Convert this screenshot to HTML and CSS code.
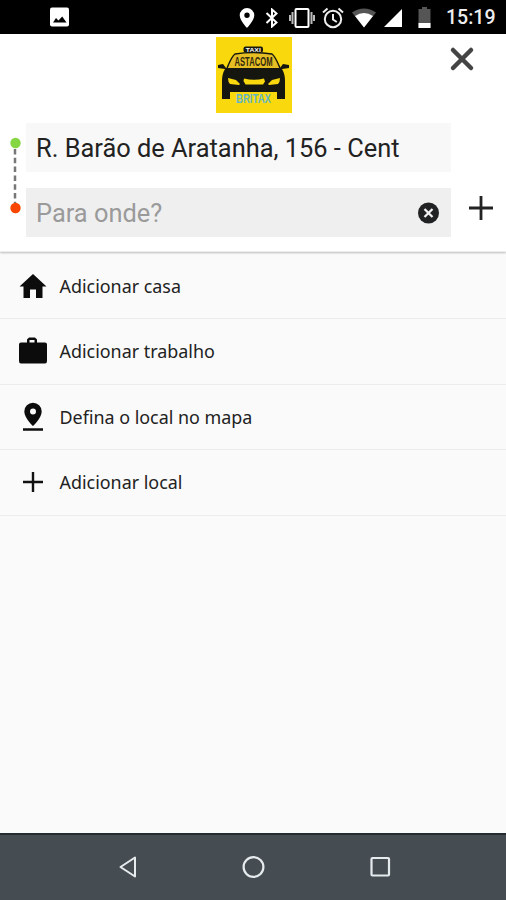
FILE: index.html
```html
<!DOCTYPE html>
<html lang="pt-BR">

<head>
  <meta charset="UTF-8" />
  <meta name="viewport" content="width=device-width, initial-scale=1.0" />
  <title>Para onde?</title>
  <link rel="stylesheet" href="styles.css">
</head>

<body>
  <div class="screen">
    <div class="status-bar">
      <svg class="photo" width="20" height="20" viewBox="0 0 20 20">
        <rect x="0" y="0.5" width="19" height="19" rx="2" fill="#fff" />
        <path d="M3 15.500l3-4.500 2.500 2.500 3.700-4 4.300 6z" fill="#000" />
      </svg>
      <div class="status-icons">
        <svg width="16" height="20" viewBox="0 0 16 20">
          <path d="M8 0a7.300 7.300 0 0 0-7.300 7.300C.700 12.500 8 20 8 20s7.300-7.500 7.300-12.700A7.300 7.300 0 0 0 8 0zm0 4.500a2.700 2.700 0 1 1 0 5.400 2.700 2.700 0 0 1 0-5.400z" fill="#fff" fill-rule="evenodd" />
        </svg>
        <svg class="bluetooth" width="14" height="20" viewBox="0 0 14 20">
          <path d="M1.500 5l10 9.500L7 18.500v-17l4.500 4L1.500 15" fill="none" stroke="#fff" stroke-width="2" />
        </svg>
        <svg class="vibrate" width="26" height="20" viewBox="0 0 26 20">
          <rect x="6.500" y="1" width="13" height="18" rx="1" fill="none" stroke="#fff" stroke-width="2" />
          <path d="M3.500 4v12M22.500 4v12M1 7v6M25 7v6" stroke="#bbb" stroke-width="2" />
        </svg>
        <svg class="alarm" width="22" height="22" viewBox="0 0 22 22">
          <circle cx="11" cy="12" r="8.200" fill="none" stroke="#eee" stroke-width="2" />
          <path d="M11 7v5.500l3.800 2.500M1 5.500l4.500-4M21 5.500l-4.500-4" fill="none" stroke="#eee" stroke-width="2" />
        </svg>
        <svg class="wifi" width="24" height="20" viewBox="0 0 24 20">
          <path d="M0 4.500Q12-3.500 24 4.500L12 19.500z" fill="#555" />
          <path d="M3 8Q12 2 21 8L12 19.500z" fill="#fff" />
        </svg>
        <svg class="signal" width="18" height="18" viewBox="0 0 18 18">
          <path d="M0 18L18 0v18z" fill="#fff" />
        </svg>
        <svg class="battery" width="13" height="21" viewBox="0 0 13 21">
          <path d="M4 0h5v2h3.500v19H.500V2H4z" fill="#555" />
          <path d="M.500 16h12v5H.500z" fill="#fff" />
        </svg>
        <span class="clock">15:19</span>
      </div>
    </div>

    <header class="header">
      <div class="top">
        <svg class="logo" width="76" height="76" viewBox="0 0 76 76">
          <rect width="76" height="76" fill="#f9d90d" />
          <rect x="27.500" y="9.500" width="19.500" height="6" rx="2" fill="#17180f" />
          <text x="37.300" y="14.700" class="logo-taxi" textLength="15" lengthAdjust="spacingAndGlyphs">TAXI</text>
          <path d="M11 31q5-12 8-14 18-3 37 0 3 2 8 14" fill="#e5be24" stroke="#17180f" stroke-width="1.500" />
          <path d="M2 28l5-1 3 4h54l3-4 6 1v3l-7 1q3 5 3 12v18h-8v-7H14v7H6V44q0-7 3-12l-7-1z" fill="#15160f" />
          <path d="M12 41l8 2 4 4-1 1-9-1q-2-2-2-6zM64 41l-8 2-4 4 1 1 9-1q2-2 2-6z" fill="#f9d90d" />
          <path d="M28 41.500q10 2.500 20 0l1 3-2 3H29.500L27.500 44z" fill="#f9d90d" />
          <text x="37.500" y="28.800" class="logo-name" textLength="38" lengthAdjust="spacingAndGlyphs">ASTACOM</text>
          <text x="37.500" y="65.800" class="logo-sub" textLength="35" lengthAdjust="spacingAndGlyphs">BRITAX</text>
        </svg>
        <svg class="close" width="26" height="26" viewBox="0 0 26 26">
          <path d="M4 4l18 18M22 4L4 22" stroke="#444" stroke-width="4.500" stroke-linecap="round" />
        </svg>
      </div>

      <div class="route">
        <svg class="track" width="12" height="78" viewBox="0 0 12 78">
          <path d="M6 12v54" stroke="#777" stroke-width="2.500" stroke-dasharray="5.500 3.300" />
          <circle cx="6.500" cy="6" r="5.200" fill="#84d643" />
          <circle cx="6.500" cy="71" r="5.200" fill="#fa4600" />
        </svg>
        <div class="fields">
          <div class="field origin"><span class="address">R. Barão de Aratanha, 156 - Cent</span></div>
          <div class="field destination">
            <span class="placeholder">Para onde?</span>
            <svg width="22" height="22" viewBox="0 0 22 22">
              <circle cx="10.500" cy="11" r="10.500" fill="#202224" />
              <path d="M6.500 7l8 8M14.500 7l-8 8" stroke="#f2f2f2" stroke-width="2.300" />
            </svg>
          </div>
        </div>
        <svg class="add" width="24" height="24" viewBox="0 0 24 24">
          <path d="M12 0v24M0 12h24" stroke="#222" stroke-width="2.800" />
        </svg>
      </div>
    </header>

    <main class="list">
      <div class="item">
        <svg width="30" height="30" viewBox="0 0 30 30">
          <path d="M15 3L1.500 15.500h4V27H12v-8.500h6V27h6.500V15.500h4z" fill="#0c0c0c" />
        </svg>
        <span>Adicionar casa</span>
      </div>
      <div class="item">
        <svg width="30" height="30" viewBox="0 0 30 30">
          <path d="M3 6.500h6V3.500l2-2h6l2 2v3h8q2 0 2 2V25q0 2.500-2 2.500H3q-2 0-2-2.500V8.500q0-2 2-2zm8.500 0h5V4h-5z" fill="#0c0c0c" fill-rule="evenodd" />
        </svg>
        <span>Adicionar trabalho</span>
      </div>
      <div class="item">
        <svg width="30" height="30" viewBox="0 0 30 30">
          <path d="M15 .800a8.700 8.700 0 0 0-8.700 8.700C6.300 16 15 24 15 24s8.700-8 8.700-14.500A8.700 8.700 0 0 0 15 .800zm0 5.700a3 3 0 1 1 0 6 3 3 0 0 1 0-6z" fill="#0c0c0c" fill-rule="evenodd" />
          <path d="M5 27.500h20" stroke="#0c0c0c" stroke-width="2.500" />
        </svg>
        <span>Defina o local no mapa</span>
      </div>
      <div class="item">
        <svg width="30" height="30" viewBox="0 0 30 30">
          <path d="M15 5v20M5 15h20" stroke="#111" stroke-width="2.400" />
        </svg>
        <span>Adicionar local</span>
      </div>
    </main>

    <nav class="nav-bar">
      <svg width="26" height="26" viewBox="0 0 26 26">
        <path d="M6 13L20.500 3.500v19z" transform="translate(1.500 0)" fill="none" stroke="#e6ebee" stroke-width="2" stroke-linejoin="round" />
      </svg>
      <svg width="26" height="26" viewBox="0 0 26 26">
        <circle cx="13.500" cy="13" r="9.900" fill="none" stroke="#e6ebee" stroke-width="2.200" />
      </svg>
      <svg width="26" height="26" viewBox="0 0 26 26">
        <rect x="4.500" y="4" width="17.500" height="17.500" rx="1" fill="none" stroke="#e6ebee" stroke-width="2.200" />
      </svg>
    </nav>
  </div>
</body>

</html>
```
FILE: styles.css
```css
* {
  box-sizing: border-box;
}

body {
  margin: 0;
  font-family: Roboto, sans-serif;
  background: #fafafa;
}

svg {
  display: block;
  flex-shrink: 0;
}

.screen {
  display: flex;
  flex-direction: column;
  width: 506px;
  height: 900px;
  overflow: hidden;
}

/* Status bar */
.status-bar {
  display: flex;
  align-items: center;
  justify-content: space-between;
  height: 34px;
  padding: 0 11px 0 50px;
  background: #000;
}

.status-icons {
  display: flex;
  align-items: center;
  padding-top: 1px;
}

.bluetooth {
  margin-left: 10px;
}

.vibrate {
  margin-left: 10px;
}

.alarm {
  margin-left: 7px;
}

.wifi {
  margin-left: 8px;
}

.signal {
  margin-left: 8px;
}

.battery {
  margin-left: 16px;
}

.clock {
  width: 49px;
  margin-left: 15px;
  color: #eee;
  font-size: 19.500px;
  font-weight: 500;
  line-height: 35px;
  white-space: nowrap;
}

/* Header */
.header {
  height: 218px;
  background: #fff;
  border-bottom: 1px solid #eee;
  box-shadow: 0 1px 2px rgba(0, 0, 0, 0.25);
  z-index: 1;
}

.top {
  display: grid;
  grid-template-columns: 1fr 76px 1fr;
  height: 89px;
  padding: 3px 0 0 1px;
}

.logo {
  grid-column: 2;
}

.close {
  justify-self: end;
  margin: 9px 31px 0 0;
}

.logo-taxi,
.logo-name,
.logo-sub {
  font-family: "Liberation Sans", sans-serif;
  font-weight: bold;
  text-anchor: middle;
}

.logo-taxi {
  font-size: 6px;
  fill: #fff;
}

.logo-name {
  font-size: 12px;
  fill: #33290c;
}

.logo-sub {
  font-size: 12px;
  fill: #62b5c4;
}

.route {
  display: flex;
  padding-left: 9px;
}

.track {
  margin-top: 14px;
}

.fields {
  display: flex;
  flex-direction: column;
  gap: 16px;
  width: 425px;
  margin-left: 5px;
}

.field {
  display: flex;
  align-items: center;
  height: 49px;
  padding: 0 11px 0 10px;
  font-size: 25.400px;
  line-height: 48px;
}

.origin {
  background: #f8f8f8;
  color: #222;
}

.address {
  width: 366px;
  white-space: nowrap;
}

.destination {
  justify-content: space-between;
  background: #efefef;
  color: #9a9a9a;
}

.add {
  margin: 73px 0 0 18px;
}

/* Shortcuts */
.list {
  flex: 1;
  padding-top: 1.500px;
}

.item {
  display: flex;
  align-items: center;
  height: 65.500px;
  padding-left: 17.500px;
  border-bottom: 1px solid #ececec;
  color: #222;
  font-family: "Noto Sans", sans-serif;
  font-size: 17.900px;
}

.item span {
  margin-left: 12px;
  white-space: nowrap;
}

/* Android buttons */
.nav-bar {
  display: flex;
  justify-content: center;
  gap: 101px;
  height: 67px;
  padding-top: 19px;
  background: #454d53;
  border-top: 2px solid #242c31;
}
```
